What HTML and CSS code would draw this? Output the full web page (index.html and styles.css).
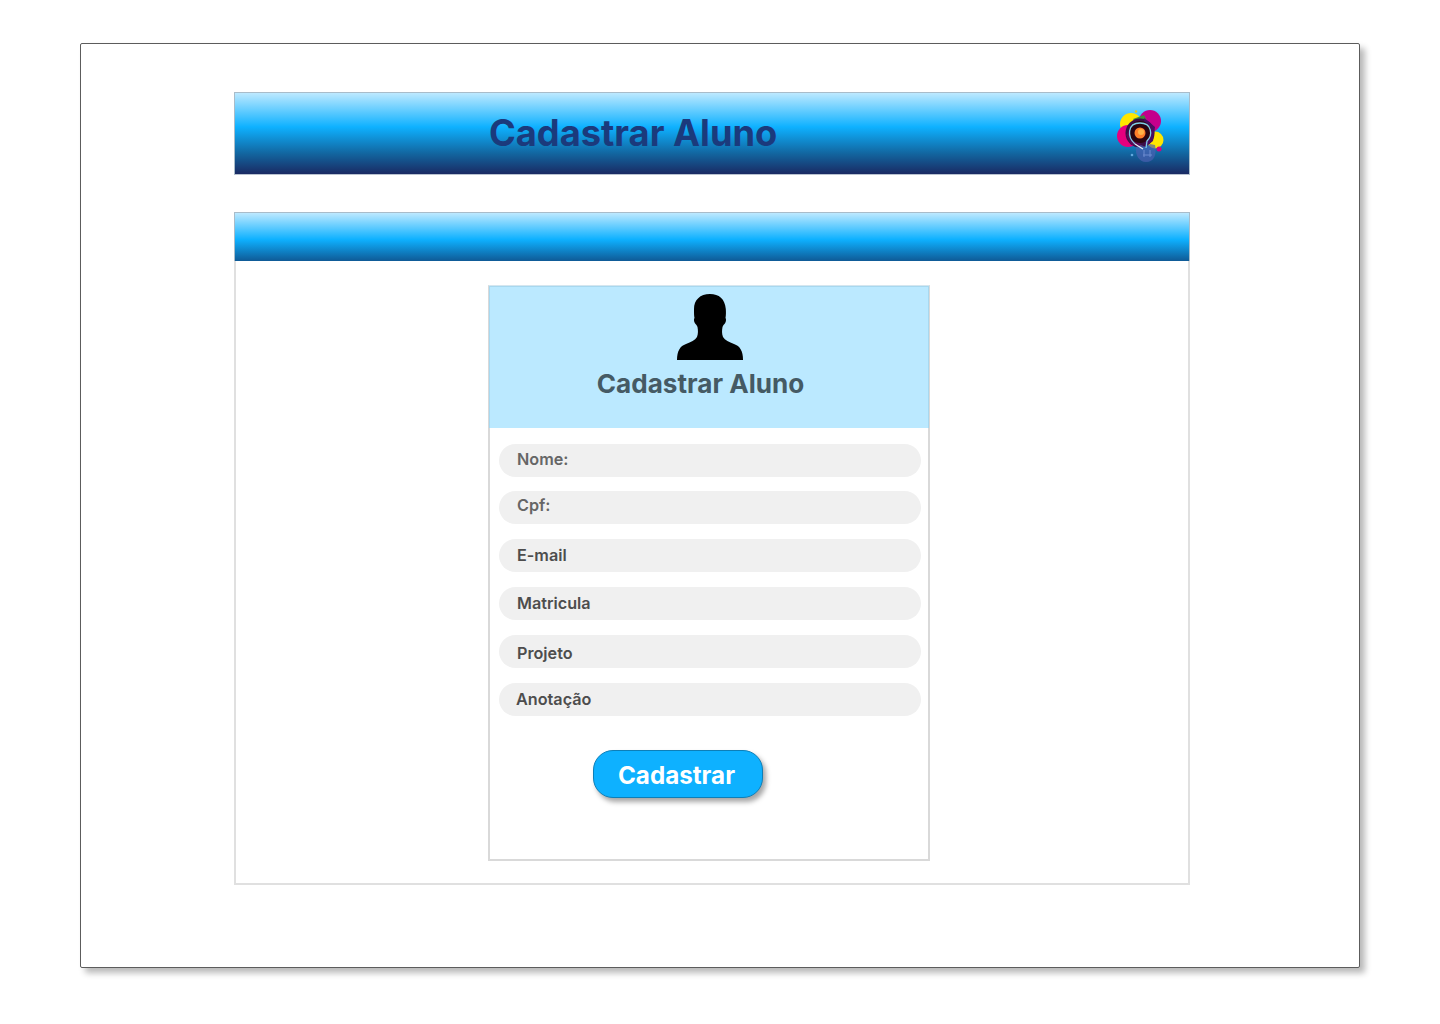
FILE: index.html
```html
<!DOCTYPE html>
<html lang="pt">
<head>
<meta charset="utf-8">
<title>Cadastrar Aluno</title>
<link rel="stylesheet" href="styles.css">
</head>
<body>
<main class="frame">
  <header class="topbar">
    <h1 class="topbar-title">Cadastrar Aluno</h1>
    <svg class="logo" width="47" height="53" viewBox="0 0 47 53" aria-hidden="true">
      <circle cx="19" cy="1.500" r="1.200" fill="#e7c51a"/>
      <circle cx="14" cy="14" r="11" fill="#ffe600"/>
      <circle cx="11" cy="26" r="11" fill="#e6007e"/>
      <circle cx="33" cy="11" r="11" fill="#c4008c"/>
      <circle cx="38" cy="30" r="8.500" fill="#ffe600"/>
      <circle cx="42" cy="39" r="2.500" fill="#d6007f"/>
      <path d="M16 9 27 5 31 13 20 15Z" fill="#3f8a3a"/>
      <circle cx="23" cy="23" r="14.500" fill="#3a0f45"/>
      <path d="M27 8 38 17 36 31 28 37Z" fill="#4b0d62"/>
      <path d="M9 25 17 14 24 36 14 35Z" fill="#5a0a55"/>
      <circle cx="23" cy="22" r="11" fill="#2a0512"/>
      <path d="M19 37c-1 8 3 15 10 15 8 0 11-7 9-17l-5-1-4 3-5-2Z" fill="#4a5fb0" opacity=".7"/>
      <path d="M27 40v7M33 40v7M26 45h9" stroke="#6d8bcf" stroke-width="1" fill="none"/>
      <circle cx="15" cy="45" r="1.300" fill="#5fa8de"/>
      <path d="M18 34C10 27 10 13 23 13c12 0 13 12 7 18l-1 7" fill="none" stroke="#7fcfe6" stroke-width="1.300"/>
      <path d="M18 34l8 5" stroke="#e8f4f8" stroke-width="1.200"/>
      <circle cx="23" cy="23" r="5.500" fill="#ff7f2a"/>
      <circle cx="24" cy="22" r="3" fill="#ffb347"/>
    </svg>
  </header>

  <section class="panel">
    <div class="panel-bar"></div>
    <div class="panel-body">
      <form class="card">
        <div class="card-head">
          <svg class="avatar" width="66" height="66" viewBox="0 0 66 66" aria-hidden="true">
            <path d="M33 0c-10 0-16 6-16 15 0 4 0 7 .5 9-.7.800-.8 3 .3 5 1 1.500 2 2 2.700 4 .6 3 .8 7-.5 10-2 3.500-6 5-11 7C3 52 0 57 0 66h66c0-9-3-14-9-16-5-2-9-3.500-11-7-1.300-3-1.100-7-.5-10 .7-2 1.700-2.500 2.700-4 1.100-2 1-4.200.3-5 .6-3 .5-6 .3-9C48 5 42 0 33 0Z"/>
          </svg>
          <h2 class="card-title">Cadastrar Aluno</h2>
        </div>
        <div class="fields">
          <div class="field field-nome muted">Nome:</div>
          <div class="field field-cpf muted">Cpf:</div>
          <div class="field field-email">E-mail</div>
          <div class="field field-mat">Matricula</div>
          <div class="field field-proj">Projeto</div>
          <div class="field field-anot">Anotação</div>
        </div>
        <button class="submit" type="button">Cadastrar</button>
      </form>
    </div>
  </section>
</main>
</body>
</html>
```
FILE: styles.css
```css
* { box-sizing: border-box; }

html, body { margin: 0; background: #fff; }

body {
  width: 1440px;
  height: 1024px;
  padding: 43px 80px 0;
  overflow: hidden;
  font-family: Inter, "Liberation Sans", sans-serif;
}

.frame {
  width: 1280px;
  height: 925px;
  padding: 48px 169px 0 153px;
  background: #fff;
  border: 1px solid #5c5c5c;
  border-radius: 2px;
  box-shadow: 5px 5px 6px rgba(0, 0, 0, .28);
}

.topbar {
  display: flex;
  align-items: center;
  justify-content: space-between;
  height: 83px;
  padding: 0 25px 2px 254px;
  border: 1px solid #a9bcc9;
  border-bottom-color: #b8c2d0;
  background: linear-gradient(#bde9ff 0%, #0eb1ff 42%, #12659f 75%, #1a2a63 100%);
}

.topbar-title {
  margin: 0;
  font-size: 36.250px;
  font-weight: 700;
  line-height: 44px;
  color: #1b3a7c;
}

.logo { display: block; margin-top: 8px; }

.panel {
  margin-top: 37px;
  height: 673px;
  display: flex;
  flex-direction: column;
}

.panel-bar {
  height: 49px;
  flex: none;
  border: 1px solid #a9bcc9;
  border-bottom: 0;
  background: linear-gradient(#bde9ff 0%, #0eb1ff 55%, #0f5a96 100%);
}

.panel-body {
  flex: 1;
  padding: 24px 0 0 252px;
  border: 2px solid #e0e0e0;
  border-top: 0;
}

.card {
  width: 442px;
  height: 576px;
  border: 2px solid #d9d9d9;
  border-top-color: #d5e6ef;
}

.card-head {
  height: 142px;
  padding-top: 7px;
  margin: -1px -1px 0;
  display: flex;
  flex-direction: column;
  align-items: center;
  background: #bbe9ff;
  border: 1px solid #a8d8ef;
  border-bottom: 0;
}

.avatar { display: block; flex: none; margin-left: 1px; }

.card-title {
  margin: 8px 17px 0 0;
  font-size: 26.100px;
  font-weight: 700;
  line-height: 32px;
  color: #455a64;
}

.fields { padding: 16px 7px 0 9px; }

.field {
  height: 33px;
  padding-left: 18px;
  border-radius: 17px;
  background: #f0f0f0;
  font-size: 16.200px;
  font-weight: 600;
  line-height: 31px;
  color: #4d4d4d;
}

.muted { color: #666; }

.field-cpf { margin-top: 14px; line-height: 29px; }
.field-email, .field-mat, .field-proj, .field-anot { margin-top: 15px; }
.field-email { line-height: 33px; }
.field-mat { line-height: 33px; }
.field-proj { line-height: 37px; }
.field-anot { padding-left: 17px; line-height: 33px; }

.submit {
  display: block;
  width: 170px;
  height: 48px;
  margin: 34px 0 0 103px;
  padding: 2px 3px 0 0;
  border: 1px solid #0d7fb8;
  border-radius: 20px;
  background: #0eb1ff;
  box-shadow: 3px 4px 5px rgba(0, 0, 0, .35);
  font-family: inherit;
  font-size: 24.200px;
  font-weight: 700;
  color: #fff;
}
```
